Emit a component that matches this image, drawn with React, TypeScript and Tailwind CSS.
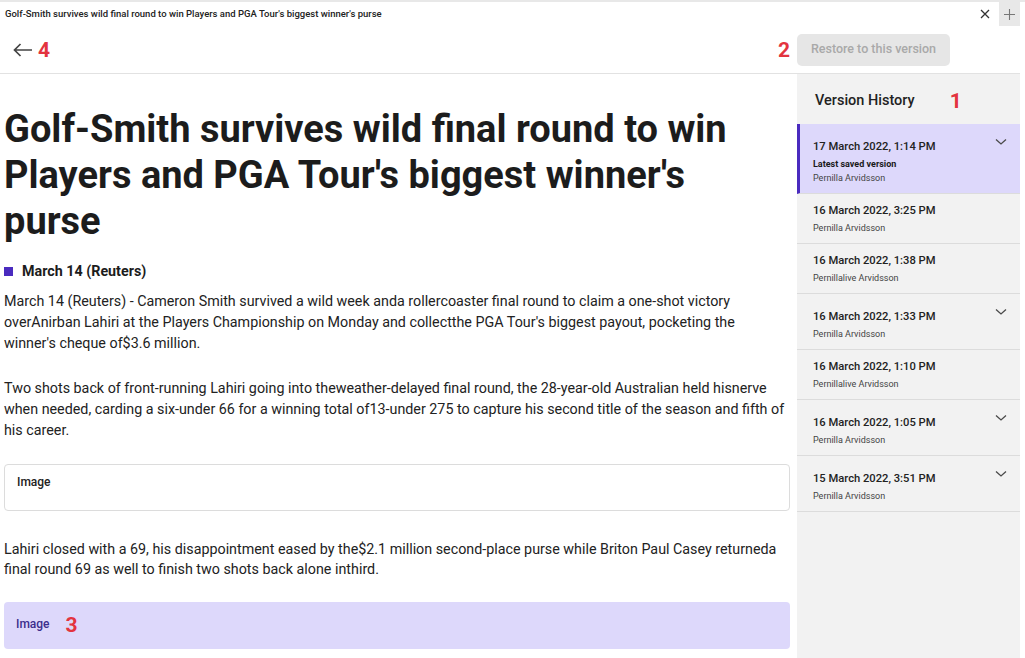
import { ReactNode } from "react";

const VERSIONS = [
  { date: "17 March 2022, 1:14 PM", name: "Pernilla Arvidsson", latest: true, more: true },
  { date: "16 March 2022, 3:25 PM", name: "Pernilla Arvidsson" },
  { date: "16 March 2022, 1:38 PM", name: "Pernillalive Arvidsson" },
  { date: "16 March 2022, 1:33 PM", name: "Pernilla Arvidsson", more: true },
  { date: "16 March 2022, 1:10 PM", name: "Pernillalive Arvidsson" },
  { date: "16 March 2022, 1:05 PM", name: "Pernilla Arvidsson", more: true },
  { date: "15 March 2022, 3:51 PM", name: "Pernilla Arvidsson", more: true }
];

function Marker({ children, className = "" }: { children: ReactNode; className?: string }) {
  return (
    <span className={`text-[21px] font-bold leading-none text-[#e3343f] ${className}`}>{children}</span>
  );
}

function Chevron() {
  return (
    <svg width="12" height="8" viewBox="0 0 12 8" fill="none" className="text-[#4a4a4a]">
      <path d="M1 1.5 L6 6 L11 1.5" stroke="currentColor" strokeWidth="1.3" />
    </svg>
  );
}

function VersionItem({ v }: { v: (typeof VERSIONS)[number] }) {
  return (
    <div
      className={`relative border-b border-[#dcdcdc] pb-[9px] ${v.more ? "pt-[16px]" : "pt-[10px]"} ${
        v.latest ? "border-l-[3px] border-l-[#4a2bbf] bg-[#ddd8fb] pl-[13px]" : "pl-[16px]"
      }`}
    >
      <div className="text-[11.2px] font-medium leading-[14px] text-[#222]">{v.date}</div>
      {v.latest && (
        <div className="mt-[4px] text-[9px] font-bold leading-[12px] text-[#1a1a1a]">Latest saved version</div>
      )}
      <div className={`${v.latest ? "mt-[2px]" : "mt-[4px]"} text-[9px] leading-[12px] text-[#444]`}>{v.name}</div>
      {v.more && (
        <div className="absolute right-[13px] top-[14px]">
          <Chevron />
        </div>
      )}
    </div>
  );
}

function ImageBlock({ selected }: { selected?: boolean }) {
  return (
    <div
      className={`h-[47px] rounded-[4px] px-[12px] pt-[9px] ${
        selected ? "bg-[#ddd8fb]" : "border border-[#dcdcdc] bg-white"
      }`}
    >
      <div className="flex items-center gap-[16px]">
        <span className={`text-[12px] font-medium leading-[16px] ${selected ? "text-[#3b2e8c]" : "text-[#222]"}`}>
          Image
        </span>
        {selected && <Marker className="mt-[4px]">3</Marker>}
      </div>
    </div>
  );
}

export default function App() {
  return (
    <div
      className="flex h-[658px] w-[1025px] flex-col overflow-hidden bg-white text-[#222]"
      style={{ fontFamily: "Roboto, 'Noto Sans', sans-serif" }}
    >
      {/* Tab strip */}
      <div className="h-[2px] shrink-0 bg-[#e8e8e8]" />
      <div className="flex h-[24px] shrink-0 items-center">
        <div className="flex-1 truncate pl-[5px] text-[9.5px] font-medium text-[#222]">
          Golf-Smith survives wild final round to win Players and PGA Tour's biggest winner's purse
        </div>
        <div className="flex h-full w-[28px] items-center justify-center">
          <svg width="10" height="10" viewBox="0 0 10 10" stroke="#333" strokeWidth="1.3">
            <path d="M1 1 L9 9 M9 1 L1 9" />
          </svg>
        </div>
        <div className="flex h-full w-[21px] items-center justify-center bg-[#e8e8e8]">
          <svg width="11" height="11" viewBox="0 0 11 11" stroke="#777" strokeWidth="1.1">
            <path d="M5.5 0 V11 M0 5.5 H11" />
          </svg>
        </div>
        <div className="w-[5px]" />
      </div>

      {/* Header */}
      <div className="flex h-[48px] w-[1020px] shrink-0 items-center border-b border-[#e2e2e2]">
        <div className="flex w-[797px] items-center pl-[13px] pr-[7px]">
          <svg width="20" height="14" viewBox="0 0 20 14" fill="none" stroke="#444" strokeWidth="1.7">
            <path d="M1.5 7 H19 M7.5 1 L1.5 7 L7.5 13" />
          </svg>
          <Marker className="ml-[5px] mt-[2px]">4</Marker>
          <div className="flex-1" />
          <Marker className="mt-[2px]">2</Marker>
        </div>
        <button className="h-[32px] w-[153px] rounded-[5px] bg-[#e6e6e6] text-[12.5px] font-medium text-[#a9a9a9]">
          Restore to this version
        </button>
      </div>

      {/* Body */}
      <div className="flex min-h-0 flex-1">
        <main className="w-[797px] shrink-0 overflow-hidden pl-[4px] pr-[7px] pt-[32px]">
          <h1 className="text-[38px] font-bold leading-[46px] text-[#1c1c1c]">
            Golf-Smith survives wild final round to win Players and PGA Tour's biggest winner's purse
          </h1>
          <div className="mt-[17px] flex items-center gap-[9px]">
            <span className="h-[9px] w-[9px] bg-[#4a2bbf]" />
            <span className="text-[14.3px] font-bold leading-[20px] text-[#1c1c1c]">March 14 (Reuters)</span>
          </div>
          <p className="mt-[10px] text-[14.3px] leading-[21px]">
            March 14 (Reuters) - Cameron Smith survived a wild week anda rollercoaster final round to claim a one-shot
            victory overAnirban Lahiri at the Players Championship on Monday and collectthe PGA Tour's biggest payout,
            pocketing the winner's cheque of$3.6 million.
          </p>
          <p className="mt-[24px] text-[14.3px] leading-[21px]">
            Two shots back of front-running Lahiri going into theweather-delayed final round, the 28-year-old Australian
            held hisnerve when needed, carding a six-under 66 for a winning total of13-under 275 to capture his second
            title of the season and fifth of his career.
          </p>
          <div className="mt-[23px]">
            <ImageBlock />
          </div>
          <p className="mt-[28px] text-[14.3px] leading-[20px]">
            Lahiri closed with a 69, his disappointment eased by the$2.1 million second-place purse while Briton Paul
            Casey returneda final round 69 as well to finish two shots back alone inthird.
          </p>
          <div className="mt-[23px]">
            <ImageBlock selected />
          </div>
        </main>

        <aside className="w-[223px] shrink-0 bg-[#f2f2f2]">
          <div className="flex h-[50px] items-center pl-[18px] pt-[4px]">
            <span className="text-[14.5px] font-medium text-[#222]">Version History</span>
            <Marker className="ml-[35px]">1</Marker>
          </div>
          {VERSIONS.map((v) => (
            <VersionItem key={v.date} v={v} />
          ))}
        </aside>
      </div>
    </div>
  );
}
